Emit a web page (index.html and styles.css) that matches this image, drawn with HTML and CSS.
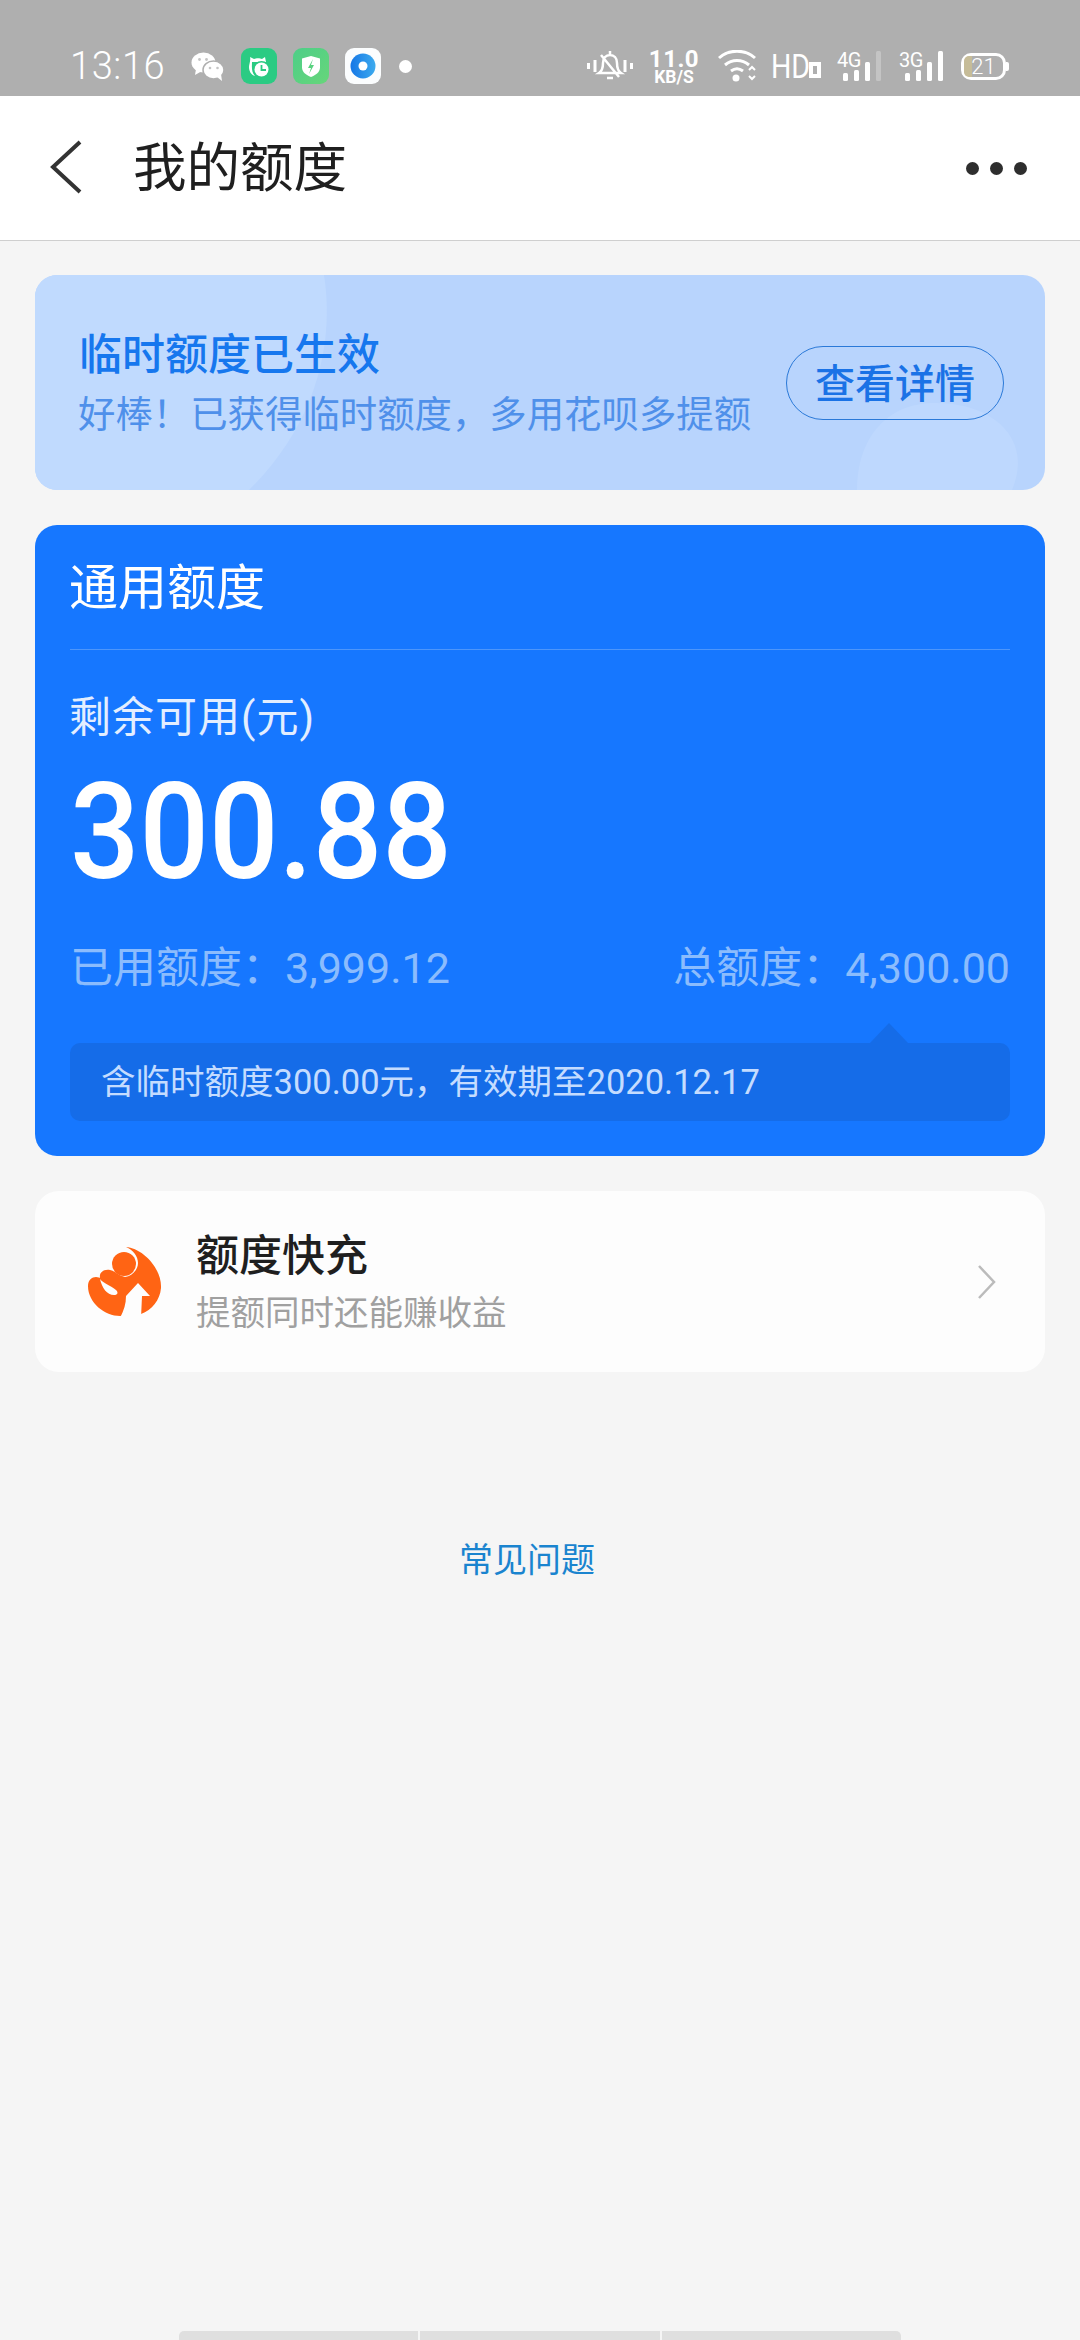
FILE: index.html
```html
<!DOCTYPE html>
<html lang="zh">
<head>
<meta charset="utf-8">
<title>我的额度</title>
<link rel="stylesheet" href="styles.css">
</head>
<body>
<div class="status">
  <div class="status-left">
    <span class="time">13:16</span>
    <svg class="wechat" viewBox="0 0 33 29"><ellipse cx="12.500" cy="10.500" rx="12" ry="10" fill="#fff"/><path d="M5 17l-1 6 7-4z" fill="#fff"/><ellipse cx="22.500" cy="18" rx="10.500" ry="9" fill="#fff" stroke="#afafaf" stroke-width="1.500"/><path d="M26 25l5 4-1-7z" fill="#fff"/><circle cx="8.500" cy="7.500" r="1.400" fill="#c4c4c4"/><circle cx="15.500" cy="7.500" r="1.400" fill="#c4c4c4"/><circle cx="19" cy="16" r="1.300" fill="#c4c4c4"/><circle cx="26.500" cy="16" r="1.300" fill="#c4c4c4"/></svg>
    <svg class="app" viewBox="0 0 36 36"><rect width="36" height="36" rx="9" fill="#2bcb83"/><path d="M9 9l4 2c2-1 6-1 8 0l3-2 1 5H11c0 4-1 10 3 14-4-1-6-5-6-9 0-3 2-7 1-10z" fill="#fff"/><circle cx="20.500" cy="21.500" r="8.500" fill="#2bcb83"/><circle cx="20.500" cy="21.500" r="7" fill="#fff"/><path d="M20.500 17v5h4.500" stroke="#2bcb83" stroke-width="1.800" fill="none"/></svg>
    <svg class="app" viewBox="0 0 36 36"><defs><linearGradient id="shieldBg" x1="0" y1="0" x2="1" y2="1"><stop offset="0" stop-color="#4dce88"/><stop offset="1" stop-color="#67d67a"/></linearGradient></defs><rect width="36" height="36" rx="9" fill="url(#shieldBg)"/><path d="M18 8l9 2.500v9c0 4.500-4 7.500-9 9.500-5-2-9-5-9-9.500v-9z" fill="#fff"/><path d="M20 11l-5 9h3l-2 6 5-9h-3z" fill="#58d27f"/></svg>
    <svg class="app" viewBox="0 0 36 36"><defs><linearGradient id="discBg" x1="0" y1="0" x2="1" y2="0"><stop offset="0" stop-color="#1677e6"/><stop offset="1" stop-color="#3cabee"/></linearGradient></defs><rect width="36" height="36" rx="9" fill="#fbfdfe"/><circle cx="18" cy="18" r="12.500" fill="url(#discBg)"/><circle cx="18" cy="18" r="4.500" fill="#fff"/></svg>
    <span class="dot"></span>
  </div>
  <div class="status-right">
    <svg class="bell" viewBox="0 0 46 32"><path d="M1.500 13v6M8 10v12M38 10v12M44.500 13v6" stroke="#fff" stroke-width="3"/><path d="M12 23c3-2 4-6 4-10 0-5 3-8 7-8s7 3 7 8c0 4 1 8 4 10zM20 28h6M23 1v4M14 5l18 22" stroke="#fff" stroke-width="2.500" fill="none"/></svg>
    <div class="speed"><span class="speed-num">11.0</span><span class="speed-unit">KB/S</span></div>
    <svg class="wifi" viewBox="0 0 40 32"><path d="M1 8c10-9 26-9 36 0M7 15c7-6 17-6 24 0M13 21c4-3 8-3 12 0" stroke="#fff" stroke-width="3" fill="none"/><circle cx="18" cy="28" r="3.500" fill="#fff"/><path d="M31 20l3-3 3 3M31 26l3 3 3-3" stroke="#fff" stroke-width="2" fill="none"/></svg>
    <div class="hd"><span>HD</span><i></i></div>
    <div class="signal"><span class="net">4G</span><i class="b1"></i><i class="b2"></i><i class="b3"></i><i class="b4 off"></i></div>
    <div class="signal"><span class="net">3G</span><i class="b1"></i><i class="b2"></i><i class="b3"></i><i class="b4"></i></div>
    <div class="battery"><i class="charge"></i><span>21</span></div>
  </div>
</div>

<header class="nav">
  <svg class="back" viewBox="0 0 34 54"><path d="M31 2L4 27l27 25" stroke="#333" stroke-width="4" fill="none"/></svg>
  <h1 class="title">我的额度</h1>
  <div class="more"><i></i><i></i><i></i></div>
</header>

<main class="content">
  <section class="banner">
    <svg class="banner-bg" viewBox="0 0 1010 215" preserveAspectRatio="none"><path d="M0 0H289C300 70 280 150 214 215H0z" fill="#c0dafe"/><path d="M822 215C822 165 850 128 900 128 960 128 998 165 977 215z" fill="#bed8fe"/></svg>
    <div class="banner-text">
      <div class="banner-title">临时额度已生效</div>
      <div class="banner-sub">好棒<span class="c">！</span>已获得临时额度，多用花呗多提额</div>
    </div>
    <div class="pill">查看详情</div>
  </section>

  <section class="quota">
    <div class="quota-head">通用额度</div>
    <div class="quota-label">剩余可用(元)</div>
    <div class="quota-num"><span>300.88</span></div>
    <div class="quota-stats"><span>已用额度<span class="c">：</span>3,999.12</span><span>总额度<span class="c">：</span>4,300.00</span></div>
    <div class="notice">含临时额度300.00元，有效期至2020.12.17</div>
  </section>

  <section class="topup">
    <svg class="topup-icon" viewBox="18 16 74 74">
      <path d="M56 19C72 20 92 40 91 60C90 72 82 82 71 86L50 88C35 88 18 75 18 58C18 52 22 49 26 49C28 49 30 50 30 50C29 44 34 41 40 42C45 43 48 47 52 48L55 49C62 48 68 42 68 35C68 28 63 22 56 19z" fill="#ff6414"/>
      <circle cx="54" cy="36" r="12" fill="#ff6414"/>
      <path d="M30 51C33 55 40 57 46 62C49 65 47 67 44 67C37 67 32 60 30 51z" fill="#fdfdfd"/>
      <path d="M68 55L80 68H72L71 90H50C54 82 56 76 56 68z" fill="#fdfdfd"/>
    </svg>
    <div class="topup-text">
      <div class="topup-title">额度快充</div>
      <div class="topup-sub">提额同时还能赚收益</div>
    </div>
    <svg class="chev" viewBox="0 0 20 36"><path d="M2 2l15 16L2 34" stroke="#bbb" stroke-width="2.500" fill="none"/></svg>
  </section>

  <a class="faq">常见问题</a>
</main>

<div class="home"><i></i><i></i><i></i></div>
</body>
</html>
```
FILE: styles.css
```css
* { box-sizing: border-box; }
html, body { margin: 0; padding: 0; }
body {
  width: 1080px;
  height: 2340px;
  background: #f5f5f5;
  font-family: "Noto Sans CJK SC", "Noto Sans", sans-serif;
  display: flex;
  flex-direction: column;
  overflow: hidden;
}
.c { font-family: "Noto Sans CJK TC", sans-serif; }

.status {
  height: 96px;
  background: #afafaf;
  padding: 48px 0 0 70px;
  display: flex;
  justify-content: space-between;
  color: #fff;
  flex: none;
}
.status-left { display: flex; align-items: center; height: 36px; }
.time { font: 300 38px/36px Roboto, sans-serif; letter-spacing: .6px; width: 121px; flex: none; }
.wechat { width: 33px; height: 29px; margin-right: 17px; }
.app { width: 36px; height: 36px; margin-right: 16px; }
.dot { width: 13px; height: 13px; border-radius: 50%; background: #fff; margin-left: 2px; }
.status-right { display: flex; align-items: center; height: 36px; padding-right: 74px; }
.bell { width: 46px; height: 32px; margin-right: 17px; }
.speed { display: flex; flex-direction: column; align-items: center; width: 48px; font-family: Roboto, sans-serif; margin-right: 20px; }
.speed-num { font-size: 24px; line-height: 22px; font-weight: 700; letter-spacing: .5px; }
.speed-unit { font-size: 17.500px; line-height: 15px; font-weight: 700; }
.wifi { width: 40px; height: 32px; margin-right: 15px; }
.hd { display: flex; align-items: flex-end; width: 48px; margin-right: 18px; height: 26px; margin-left: -2px; }
.hd span { display: block; width: 38px; font: 400 34px/26px Roboto, sans-serif; transform: scaleX(.84); transform-origin: left; flex: none; }
.hd i { width: 12px; height: 16px; border: 4px solid #fff; display: block; flex: none; margin-bottom: 1px; }
.signal { position: relative; display: flex; align-items: flex-end; gap: 6px; height: 30px; width: 44px; padding-left: 6px; margin-right: 18px; }
.signal:last-of-type { margin-right: 19px; }
.net { position: absolute; left: 0; top: 0; font: 400 20px/18px Roboto, sans-serif; letter-spacing: -.5px; }
.signal i { width: 5px; flex: none; background: #fff; border-radius: 1.500px; display: block; }
.signal i.b1 { height: 8px; }
.signal i.b2 { height: 11px; }
.signal i.b3 { height: 19px; }
.signal i.b4 { height: 30px; }
.signal i.off { background: #c4c4c4; }
.battery { position: relative; width: 45px; height: 27px; flex: none; border: 3px solid #fff; border-radius: 10px; font: 300 22px/21px Roboto, sans-serif; text-align: center; }
.battery::after { content: ""; position: absolute; right: -6px; top: 6px; width: 3px; height: 9px; background: #fff; border-radius: 0 2px 2px 0; }
.battery span { position: relative; }
.charge { position: absolute; left: 0; top: 0; bottom: 0; width: 8px; background: #c6bc98; border-radius: 5px 0 0 5px; }

.nav {
  height: 145px;
  flex: none;
  background: #fff;
  border-bottom: 1.500px solid #cfcfcf;
  display: flex;
  align-items: center;
  padding: 0 53px 0 49px;
}
.back { width: 34px; height: 54px; margin-top: -2px; }
.title { margin: 0 0 8px 50px; font-size: 53.500px; font-weight: 400; color: #1f1f1f; line-height: 60px; flex: 1; }
.more { display: flex; gap: 11px; }
.more i { width: 13px; height: 13px; border-radius: 50%; background: #2e2e2e; display: block; }

.content { padding: 34px 35px 0; display: flex; flex-direction: column; gap: 35px; }
.banner {
  position: relative;
  height: 215px;
  border-radius: 22px;
  background: #b8d4fd;
  overflow: hidden;
  display: flex;
  align-items: center;
  justify-content: space-between;
  padding: 0 41px 0 44px;
}
.banner-bg { position: absolute; left: 0; top: 0; width: 100%; height: 100%; }
.banner-text, .pill { position: relative; }
.banner-text { padding-bottom: 4px; }
.banner-title { font-size: 43px; line-height: 56px; font-weight: 500; color: #1677ee; }
.banner-sub { font-size: 37.400px; line-height: 52px; margin-top: 7px; color: #4f90ea; margin-left: -1px; }
.pill {
  width: 218px;
  height: 74px;
  border: 1.500px solid #2a79d8;
  border-radius: 37px;
  font-size: 40px;
  line-height: 68px;
  font-weight: 500;
  color: #1a72e6;
  text-align: center;
}

.quota {
  position: relative;
  height: 631px;
  border-radius: 22px;
  background: #1677ff;
  padding: 0 35px;
  display: flex;
  flex-direction: column;
}
.quota-head {
  height: 125px;
  flex: none;
  border-bottom: 1px solid #4d96fb;
  font-size: 49px;
  line-height: 118px;
  color: #fff;
  text-indent: -1px;
}
.quota-label { font-family: Roboto, "Noto Sans CJK SC", sans-serif; font-size: 42px; line-height: 50px; margin-top: 43px; color: #e3eeff; letter-spacing: 1px; text-indent: -1px; }
.quota-num { font: 500 133px/126px Roboto, sans-serif; color: #fff; margin-top: 27px; margin-left: 0; }
.quota-num span { display: inline-block; transform: scaleX(.92); transform-origin: left; }
.quota-stats {
  display: flex;
  justify-content: space-between;
  font-family: Roboto, "Noto Sans CJK SC", sans-serif;
  font-size: 43px;
  line-height: 56px;
  color: #8bbcfd;
  margin-top: 40px;
}
.notice {
  position: relative;
  height: 78px;
  margin-top: 47px;
  background: #156ce8;
  border-radius: 10px;
  padding-left: 31px;
  font-family: Roboto, "Noto Sans CJK SC", sans-serif;
  font-size: 34.500px;
  line-height: 78px;
  color: #c4dcff;
}
.notice::before {
  content: "";
  position: absolute;
  right: 102px;
  top: -20px;
  border-left: 19px solid transparent;
  border-right: 19px solid transparent;
  border-bottom: 20px solid #156ce8;
}

.topup {
  height: 181px;
  border-radius: 24px;
  background: #fdfdfd;
  display: flex;
  align-items: center;
  padding: 0 48px 0 53px;
}
.topup-icon { width: 74px; height: 74px; flex: none; margin: 0 34px 2px 0; }
.topup-text { flex: 1; padding-bottom: 7px; }
.topup-title { font-size: 43px; line-height: 58px; font-weight: 500; color: #1f1f1f; }
.topup-sub { font-size: 34.500px; line-height: 48px; margin-top: 5px; color: #a0a0a0; }
.chev { width: 20px; height: 36px; }
.faq { font-size: 34px; line-height: 46px; color: #1a84cf; text-align: center; margin-top: 128px; padding-right: 26px; }

.home { margin: auto 0 0 179px; width: 722px; height: 9px; display: flex; gap: 2px; flex: none; }
.home i { flex: 1; background: #dfdfdf; display: block; }
.home i:first-child { border-radius: 5px 0 0 0; }
.home i:last-child { border-radius: 0 5px 0 0; }
```
